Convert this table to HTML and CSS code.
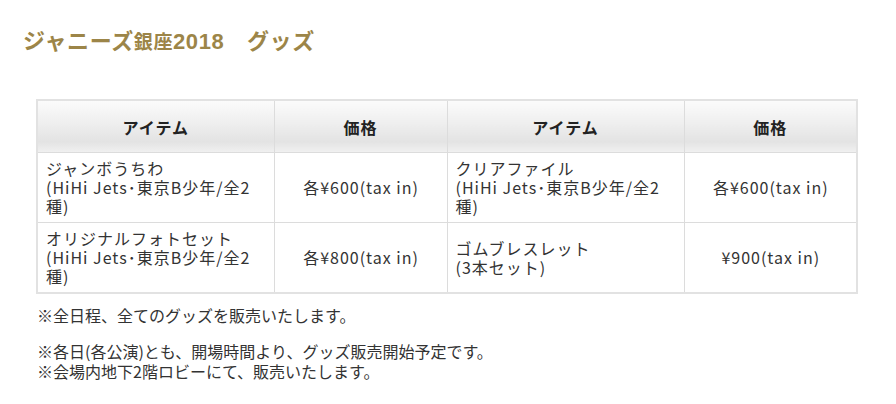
FILE: index.html
```html
<!DOCTYPE html>
<html lang="ja">
<head>
<meta charset="utf-8">
<title>グッズ</title>
<link rel="stylesheet" href="styles.css">
</head>
<body>
<div class="page">
  <h1 class="title">ジャニーズ<span class="title-small">銀座</span>2018　グッズ</h1>
  <table class="goods">
    <colgroup>
      <col class="c-item"><col class="c-price"><col class="c-item"><col class="c-price">
    </colgroup>
    <thead>
      <tr><th>アイテム</th><th>価格</th><th>アイテム</th><th>価格</th></tr>
    </thead>
    <tbody>
      <tr>
        <td class="item">ジャンボうちわ<br>(HiHi Jets･東京B少年/全2種)</td>
        <td class="price">各¥600(tax in)</td>
        <td class="item">クリアファイル<br>(HiHi Jets･東京B少年/全2種)</td>
        <td class="price">各¥600(tax in)</td>
      </tr>
      <tr>
        <td class="item">オリジナルフォトセット<br>(HiHi Jets･東京B少年/全2種)</td>
        <td class="price">各¥800(tax in)</td>
        <td class="item">ゴムブレスレット<br>(3本セット)</td>
        <td class="price">¥900(tax in)</td>
      </tr>
    </tbody>
  </table>
  <div class="notes">
    <p>※全日程、全てのグッズを販売いたします。</p>
    <p>※各日(各公演)とも、開場時間より、グッズ販売開始予定です。<br>※会場内地下2階ロビーにて、販売いたします。</p>
  </div>
</div>
</body>
</html>
```
FILE: styles.css
```css
html, body {
  margin: 0;
  padding: 0;
  background: #fff;
}
body {
  font-family: "Noto Sans CJK JP", "Noto Sans", sans-serif;
  color: #333;
}
.page {
  padding: 26px 0 0 23px;
}
.title {
  margin: 0;
  font-family: "Liberation Sans", "Noto Sans CJK JP", sans-serif;
  font-size: 22px;
  line-height: 32px;
  font-weight: bold;
  color: #9c8548;
  letter-spacing: 0.6px;
}
.title-small {
  font-size: 19px;
}
.goods {
  margin: 40px 0 0 13px;
  width: 821px;
  border-collapse: collapse;
  table-layout: fixed;
  border: 2px solid #e2e2e2;
}
.c-item { width: 237px; }
.c-price { width: 173px; }
.goods th {
  height: 51px;
  padding: 0;
  font-size: 16px;
  font-weight: bold;
  color: #222;
  letter-spacing: 1px;
  text-align: center;
  background: linear-gradient(#fbfbfb 0%, #eeeeee 45%, #e3e3e3 80%, #f0f0f0 100%);
  border: 1px solid #dcdcdc;
}
.goods td {
  padding: 6px 7px 6px 8px;
  font-size: 16px;
  line-height: 19px;
  letter-spacing: 1px;
  color: #333;
  border: 1px solid #dcdcdc;
  vertical-align: middle;
  word-break: break-all;
}
.goods td.price {
  text-align: center;
}
.notes {
  margin: 11px 0 0 14px;
  font-size: 16px;
  line-height: 20px;
  color: #333;
}
.notes p {
  margin: 0 0 16px;
}
```
